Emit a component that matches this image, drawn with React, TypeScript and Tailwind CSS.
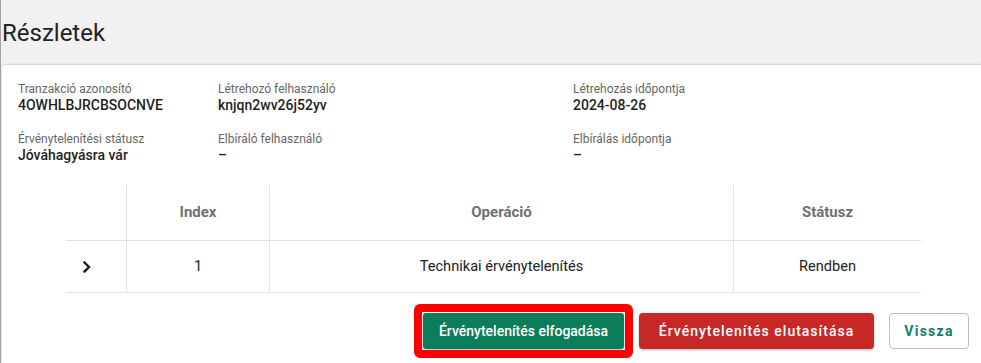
import React from "react";

const Field = ({ label, value }: { label: string; value: string }) => (
  <div className="flex flex-col">
    <div className="text-[12px] leading-[14px] text-[#666666]">{label}</div>
    <div className="mt-[1px] text-[14px] leading-[16px] font-medium text-[#1f1f1f]">{value}</div>
  </div>
);

export default function App() {
  return (
    <div
      className="w-full h-[363px] bg-[#f1f1f1] border-l border-[#a3a3a3] flex flex-col overflow-hidden"
      style={{ fontFamily: "Roboto, 'Noto Sans', sans-serif" }}
    >
      <div className="h-[64px] pt-[19px] pl-[1px] text-[24px] leading-[28px] text-[#222222] shrink-0">
        Részletek
      </div>
      <div className="flex-1 ml-[1px] bg-white border-t border-[#dcdcdc] rounded-tl-[4px] shadow-[0_0_2px_rgba(0,0,0,0.12)] flex flex-col">
        <div className="pt-[17px] pl-[16px] grid grid-cols-[200px_355px_1fr] gap-y-[19px]">
          <Field label="Tranzakció azonosító" value="4OWHLBJRCBSOCNVE" />
          <Field label="Létrehozó felhasználó" value="knjqn2wv26j52yv" />
          <Field label="Létrehozás időpontja" value="2024-08-26" />
          <Field label="Érvénytelenítési státusz" value="Jóváhagyásra vár" />
          <Field label="Elbíráló felhasználó" value="–" />
          <Field label="Elbírálás időpontja" value="–" />
        </div>

        <div className="mt-[22px] ml-[64px] w-[855px] text-[15px]">
          <div className="flex h-[56px] border-b border-[#e3e3e3] font-bold text-[#707070]">
            <div className="w-[60px]" />
            <div className="w-[143px] border-l border-[#e3e3e3] flex items-center justify-center">Index</div>
            <div className="w-[464px] border-l border-[#e3e3e3] flex items-center justify-center">Operáció</div>
            <div className="flex-1 border-l border-[#e3e3e3] flex items-center justify-center">Státusz</div>
          </div>
          <div className="flex h-[52px] border-b border-[#e3e3e3] text-[14.6px] text-[#222222]">
            <div className="w-[60px] flex items-center pl-[16px]">
              <svg width="10" height="12" viewBox="0 0 10 12" fill="none">
                <path d="M2.5 1.5 L7 6 L2.5 10.5" stroke="#1a1a1a" strokeWidth="2.4" strokeLinecap="square" />
              </svg>
            </div>
            <div className="w-[143px] border-l border-[#e3e3e3] flex items-center justify-center">1</div>
            <div className="w-[464px] border-l border-[#e3e3e3] flex items-center justify-center">
              Technikai érvénytelenítés
            </div>
            <div className="flex-1 border-l border-[#e3e3e3] flex items-center justify-center">Rendben</div>
          </div>
        </div>

        <div className="mt-[20px] pr-[12px] flex justify-end gap-[15px]">
          <div className="relative">
            <div className="absolute -inset-[9px] border-[8px] border-[#ff0000] rounded-[6px]" />
            <button className="h-[36px] w-[201px] rounded-[3px] bg-[#0b7d5a] text-white text-[14px] font-medium shadow-[0_1px_3px_rgba(0,0,0,0.3)]">
              Érvénytelenítés elfogadása
            </button>
          </div>
          <button className="h-[36px] w-[235px] rounded-[4px] bg-[#c62828] text-white text-[14px] font-medium tracking-[1px] shadow-[0_1px_3px_rgba(0,0,0,0.3)]">
            Érvénytelenítés elutasítása
          </button>
          <button className="h-[36px] w-[80px] rounded-[4px] bg-white border border-[#bdbdbd] text-[#127f6a] text-[14px] font-bold tracking-[1.25px]">
            Vissza
          </button>
        </div>
      </div>
    </div>
  );
}
